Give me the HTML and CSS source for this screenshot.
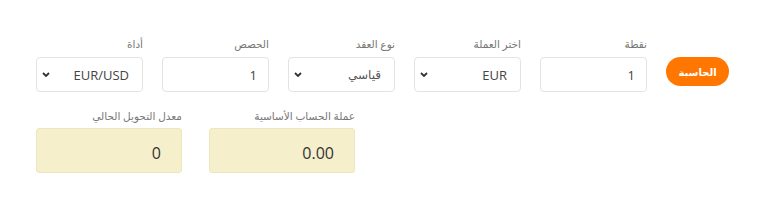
FILE: index.html
```html
<!DOCTYPE html>
<html lang="ar" dir="rtl">
<head>
    <meta charset="UTF-8">
    <meta name="viewport" content="width=device-width, initial-scale=1.0">
    <title>حاسبة النقاط</title>
    <link rel="stylesheet" href="styles.css">
</head>
<body>
    <div class="calculator">
        <div class="form-row">
            <button type="button" class="calc-button">الحاسبة</button>

            <div class="form-group">
                <label for="Points">نقطة</label>
                <input type="text" id="Points" value="1">
            </div>

            <div class="form-group">
                <label for="Currency">اختر العملة</label>
                <div class="select-wrap">
                    <select id="Currency">
                        <option>EUR</option>
                        <option>USD</option>
                    </select>
                    <svg class="chevron" width="8" height="5" viewBox="0 0 8 5"><polyline points="1,1 4,4 7,1" fill="none" stroke="#333" stroke-width="1.8"/></svg>
                </div>
            </div>

            <div class="form-group">
                <label for="Contract">نوع العقد</label>
                <div class="select-wrap">
                    <select id="Contract" class="arabic-value">
                        <option>قياسي</option>
                        <option>ميني</option>
                    </select>
                    <svg class="chevron" width="8" height="5" viewBox="0 0 8 5"><polyline points="1,1 4,4 7,1" fill="none" stroke="#333" stroke-width="1.8"/></svg>
                </div>
            </div>

            <div class="form-group">
                <label for="Lots">الحصص</label>
                <input type="text" id="Lots" value="1">
            </div>

            <div class="form-group">
                <label for="Instrument">أداة</label>
                <div class="select-wrap">
                    <select id="Instrument">
                        <option>EUR/USD</option>
                        <option>GBP/USD</option>
                    </select>
                    <svg class="chevron" width="8" height="5" viewBox="0 0 8 5"><polyline points="1,1 4,4 7,1" fill="none" stroke="#333" stroke-width="1.8"/></svg>
                </div>
            </div>
        </div>

        <div class="result-row">
            <div class="form-group result-group">
                <label>عملة الحساب الأساسية</label>
                <div class="result-box">0.00</div>
            </div>

            <div class="form-group result-group">
                <label>معدل التحويل الحالي</label>
                <div class="result-box">0</div>
            </div>
        </div>
    </div>
</body>
</html>
```

FILE: styles.css
```css
body {
    font-family: 'Open Sans', 'DejaVu Sans', sans-serif;
    background-color: #ffffff;
    margin: 0;
    color: #444;
}

.calculator {
    padding: 37px 34px 0 36px;
}

.form-row {
    display: flex;
    align-items: flex-end;
    gap: 19px;
}

.form-group {
    width: 107px;
    display: flex;
    flex-direction: column;
}

label {
    font-size: 10.5px;
    line-height: 14px;
    color: #777;
    margin-bottom: 6px;
}

input, select {
    box-sizing: border-box;
    width: 100%;
    height: 35px;
    padding: 0 11px;
    border: 1px solid #e3e3e3;
    border-radius: 4px;
    background-color: #fff;
    font-family: inherit;
    font-size: 13px;
    color: #444;
    text-align: right;
}

select {
    appearance: none;
    -webkit-appearance: none;
    padding-right: 13px;
}

.arabic-value {
    font-size: 12px;
    color: #555;
}

.select-wrap {
    position: relative;
}

.chevron {
    position: absolute;
    left: 6px;
    top: 15px;
    pointer-events: none;
}

.calc-button {
    width: 63px;
    height: 29px;
    margin-bottom: 6px;
    border: none;
    border-radius: 15px;
    background-color: #ff7700;
    color: #fff;
    font-family: inherit;
    font-size: 10px;
    font-weight: bold;
    cursor: pointer;
}

.result-row {
    display: flex;
    justify-content: flex-end;
    gap: 27px;
    margin-top: 17px;
}

.result-group {
    width: 146px;
}

.result-group label {
    margin-bottom: 5px;
}

.result-box {
    box-sizing: border-box;
    height: 45px;
    padding: 14px 20px 0;
    background-color: #f5efcc;
    border: 1px solid #ede5c0;
    border-radius: 3px;
    font-size: 16px;
    line-height: 20px;
    color: #333;
    text-align: right;
}
```
